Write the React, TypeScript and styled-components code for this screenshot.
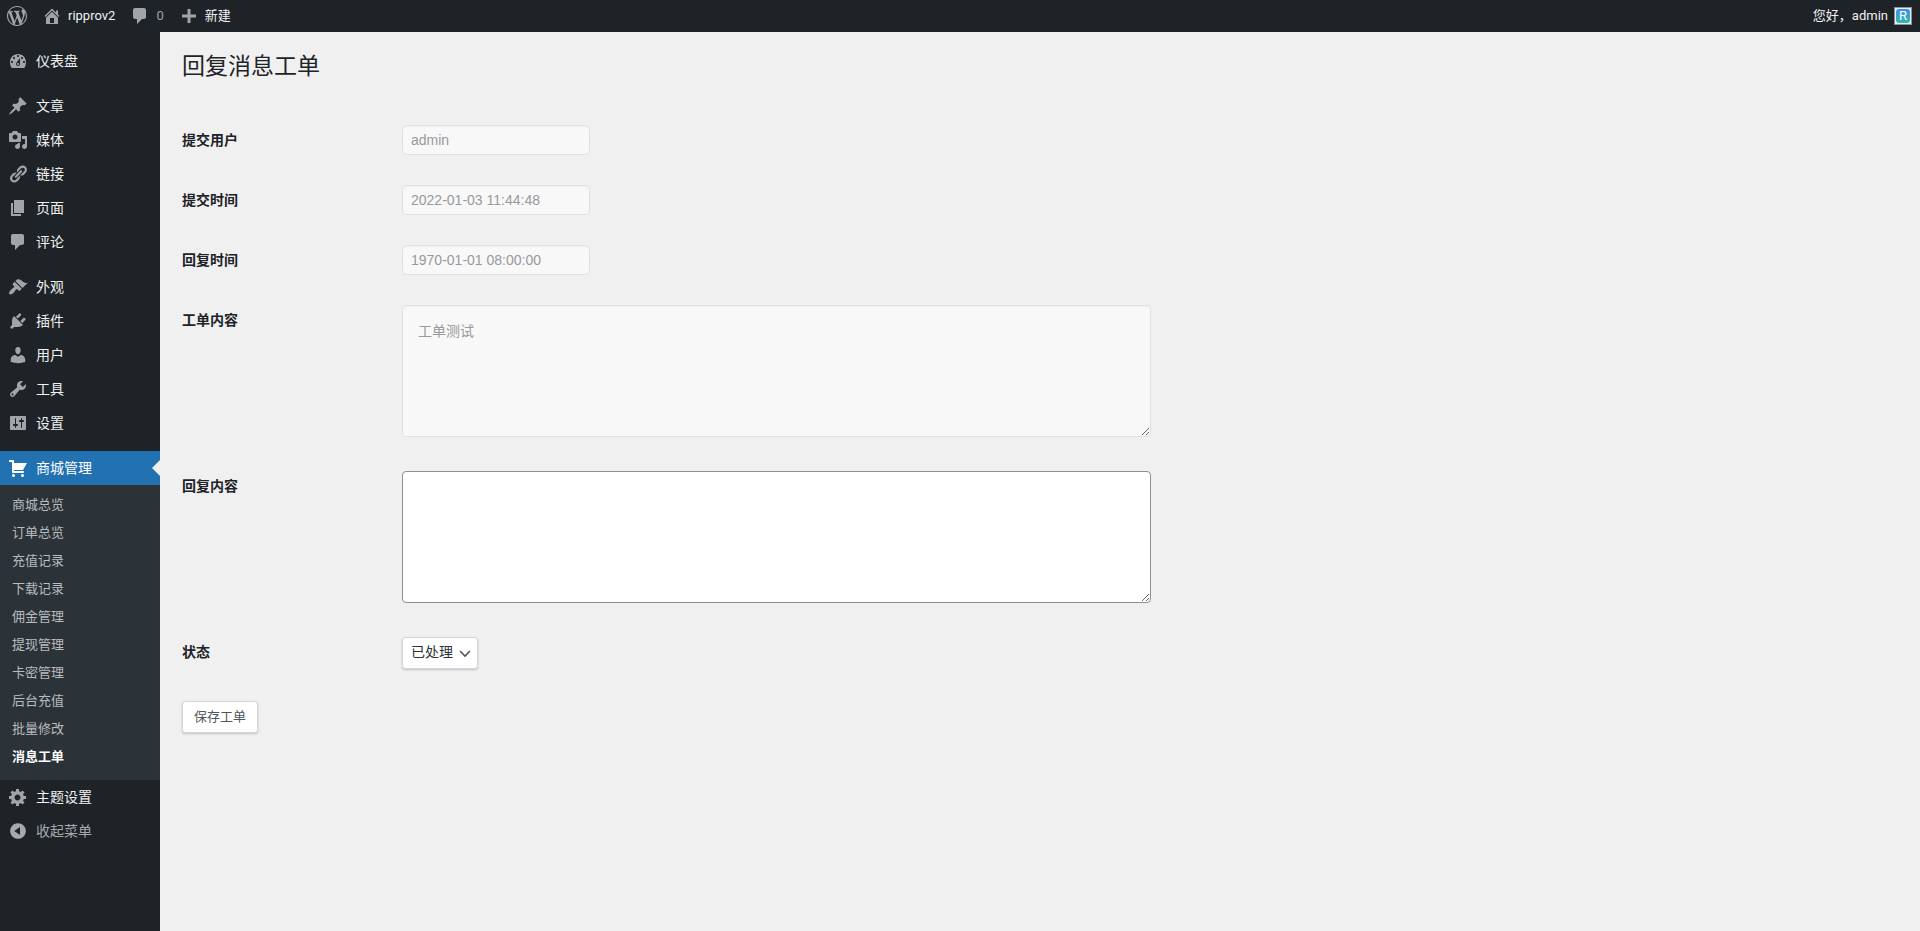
import React from 'react';
import styled, { createGlobalStyle } from 'styled-components';

const GlobalStyle = createGlobalStyle`
  *, *::before, *::after { box-sizing: border-box; }
  html, body, #root { min-height: 100vh; }
  body {
    margin: 0;
    background: #f0f0f0;
    color: #1d2327;
    font-family: "Open Sans", "Noto Sans CJK SC", sans-serif;
    font-size: 14px;
  }
  ul { margin: 0; padding: 0; list-style: none; }
  a { color: inherit; text-decoration: none; }
`;

const icons = {
  wordpress:
    'M20 10c0-5.51-4.49-10-10-10C4.48 0 0 4.49 0 10c0 5.52 4.48 10 10 10 5.51 0 10-4.48 10-10zM7.78 15.37L4.37 6.22c.55-.02 1.17-.08 1.17-.08.5-.06.44-1.13-.06-1.11 0 0-1.45.11-2.37.11-.18 0-.37 0-.58-.01C4.12 2.69 6.87 1.11 10 1.11c2.33 0 4.45.87 6.05 2.34-.68-.11-1.65.39-1.65 1.58 0 .74.45 1.36.9 2.1.35.61.55 1.36.55 2.46 0 1.49-1.4 5-1.4 5l-3.03-8.37c.54-.02.82-.17.82-.17.5-.05.44-1.25-.06-1.22 0 0-1.44.12-2.38.12-.87 0-2.33-.12-2.33-.12-.5-.03-.56 1.2-.06 1.22l.92.08 1.26 3.41zM17.41 10c.24-.64.74-1.87.43-4.25.7 1.29 1.05 2.71 1.05 4.25 0 3.29-1.73 6.24-4.4 7.78.97-2.59 1.94-5.2 2.92-7.78zM6.1 18.09C3.12 16.65 1.11 13.53 1.11 10c0-1.3.23-2.48.72-3.59C3.25 10.3 4.67 14.2 6.1 18.09zm4.03-6.63l2.58 6.98c-.86.29-1.76.45-2.71.45-.79 0-1.57-.11-2.29-.33.81-2.38 1.62-4.74 2.42-7.1z',
  home: 'M16 8.5l1.53 1.53-1.06 1.06L10 4.6l-6.47 6.49-1.06-1.06L10 2.5l4 4v-2h2v4zm-6-2.8l6 5.99V18H4v-6.31zM12 17v-5H8v5h4z',
  comment:
    'M5 2h9c1.1 0 2 .9 2 2v7c0 1.1-.9 2-2 2h-2l-5 5v-5H5c-1.1 0-2-.9-2-2V4c0-1.1.9-2 2-2z',
  plus: 'M17 8.5v3h-5.5V17h-3v-5.5H3v-3h5.5V3h3v5.5z',
  dashboard:
    'M3.76 17h12.48c1.34-1.59 1.76-3.82 1.76-6 0-4.42-3.58-8-8-8s-8 3.58-8 8c0 2.18.42 4.41 1.76 6zM10 4c.55 0 1 .45 1 1s-.45 1-1 1-1-.45-1-1 .45-1 1-1zM6 6c.55 0 1 .45 1 1s-.45 1-1 1-1-.45-1-1 .45-1 1-1zm8 0c.55 0 1 .45 1 1s-.45 1-1 1-1-.45-1-1 .45-1 1-1zm-5.37 5.55L12 7v6c0 1.1-.9 2-2 2s-2-.9-2-2c0-.57.24-1.08.63-1.45zM4 10c.55 0 1 .45 1 1s-.45 1-1 1-1-.45-1-1 .45-1 1-1zm12 0c.55 0 1 .45 1 1s-.45 1-1 1-1-.45-1-1 .45-1 1-1zm-5 3c0-.55-.45-1-1-1s-1 .45-1 1 .45 1 1 1 1-.45 1-1z',
  pin: 'M10.44 3.02l1.82-1.82 6.36 6.35-1.83 1.82c-1.05-.68-2.48-.57-3.41.36l-.75.75c-.92.93-1.04 2.35-.35 3.41l-1.83 1.82-2.41-2.41-2.8 2.79c-.42.42-3.38 2.71-3.8 2.29s1.86-3.39 2.28-3.81l2.79-2.79L4.1 9.36l1.83-1.82c1.05.69 2.48.57 3.4-.36l.75-.75c.93-.92 1.05-2.35.36-3.41z',
  media:
    'M13 11V4c0-.55-.45-1-1-1h-1.67L9 1H5L3.67 3H2c-.55 0-1 .45-1 1v7c0 .55.45 1 1 1h10c.55 0 1-.45 1-1zM7 4.5c1.38 0 2.5 1.12 2.5 2.5S8.38 9.5 7 9.5 4.5 8.38 4.5 7 5.62 4.5 7 4.5zM14 6h5v10.5c0 1.38-1.12 2.5-2.5 2.5S14 17.88 14 16.5s1.12-2.5 2.5-2.5c.17 0 .34.02.5.05V9h-3V6zm-4 8.05V13h2v3.5c0 1.38-1.12 2.5-2.5 2.5S7 17.88 7 16.5 8.12 14 9.5 14c.17 0 .34.02.5.05z',
  link: 'M17.74 2.76c1.68 1.69 1.68 4.41 0 6.1l-1.53 1.52c-1.12 1.12-2.7 1.47-4.14 1.09l2.62-2.61.76-.77.76-.76c.84-.84.84-2.2 0-3.04-.84-.85-2.2-.85-3.04 0l-.77.76-3.38 3.38c-.37-1.44-.02-3.02 1.1-4.14l1.52-1.53c1.69-1.68 4.42-1.68 6.1 0zM8.59 13.43l5.34-5.34c.42-.42.42-1.1 0-1.52-.44-.43-1.13-.39-1.53 0l-5.33 5.34c-.42.42-.42 1.1 0 1.52.44.43 1.13.39 1.52 0zm-.76 2.29l4.14-4.15c.38 1.44.03 3.02-1.09 4.14l-1.52 1.53c-1.69 1.68-4.41 1.68-6.1 0-1.68-1.68-1.68-4.42 0-6.1l1.53-1.52c1.12-1.12 2.7-1.47 4.14-1.1l-4.14 4.15c-.85.84-.85 2.2 0 3.05.84.84 2.2.84 3.04 0z',
  page: 'M6 15V2h10v13H6zm-1 1h8v2H3V5h2v11z',
  brush:
    'M14.48 11.06L7.41 3.99l1.5-1.5c.5-.56 2.3-.47 3.51.32 1.21.8 1.43 1.28 2.91 2.1 1.18.64 2.45 1.26 4.45.85zm-.71.71L6.7 4.7 4.93 6.47c-.39.39-.39 1.02 0 1.41l1.06 1.06c.39.39.39 1.03 0 1.42-.6.6-1.43 1.11-2.21 1.69-.35.26-.7.53-1.01.84C1.43 14.23.4 16.08 1.4 17.07c.99 1 2.84-.03 4.18-1.36.31-.31.58-.66.85-1.02.57-.78 1.08-1.61 1.69-2.21.39-.39 1.02-.39 1.41 0l1.06 1.06c.39.39 1.02.39 1.41 0z',
  plugin:
    'M13.11 4.36L9.87 7.6 8 5.73l3.24-3.24c.35-.34 1.05-.2 1.56.32.52.51.66 1.21.31 1.55zm-8 1.77l.91-1.12 9.01 9.01-1.19.84c-.71.71-2.63 1.16-3.82 1.16H6.14L4.9 17.26c-.59.59-1.54.59-2.12 0-.59-.58-.59-1.53 0-2.12l1.24-1.24v-3.88c0-1.13.4-3.19 1.09-3.89zm7.26 3.97l3.24-3.24c.34-.35 1.04-.21 1.55.31.52.51.66 1.21.31 1.55l-3.24 3.25z',
  user: 'M10 9.25c-2.27 0-2.73-3.44-2.73-3.44C7 4.02 7.82 2 9.97 2c2.16 0 2.98 2.02 2.71 3.81 0 0-.41 3.44-2.68 3.44zm0 2.57L12.72 10c2.39 0 4.52 2.33 4.52 4.53v2.49s-3.65 1.13-7.24 1.13c-3.65 0-7.24-1.13-7.24-1.13v-2.49c0-2.25 1.94-4.48 4.47-4.48z',
  wrench:
    'M16.68 9.77c-1.34 1.34-3.3 1.67-4.95.99l-5.41 6.52c-.99.99-2.59.99-3.58 0s-.99-2.59 0-3.57l6.52-5.42c-.68-1.65-.35-3.61.99-4.95 1.28-1.28 3.12-1.62 4.72-1.06l-2.89 2.89 2.82 2.82 2.86-2.87c.53 1.58.18 3.39-1.08 4.65zM3.81 16.21c.4.39 1.04.39 1.43 0 .4-.4.4-1.04 0-1.43-.39-.4-1.03-.4-1.43 0-.39.39-.39 1.03 0 1.43z',
  sliders:
    'M18 16V4c0-.55-.45-1-1-1H3c-.55 0-1 .45-1 1v12c0 .55.45 1 1 1h14c.55 0 1-.45 1-1zM8 11h1c.55 0 1 .45 1 1s-.45 1-1 1H8v1.5c0 .28-.22.5-.5.5s-.5-.22-.5-.5V13H6c-.55 0-1-.45-1-1s.45-1 1-1h1V5.5c0-.28.22-.5.5-.5s.5.22.5.5V11zm5-2h-1c-.55 0-1-.45-1-1s.45-1 1-1h1V5.5c0-.28.22-.5.5-.5s.5.22.5.5V7h1c.55 0 1 .45 1 1s-.45 1-1 1h-1v5.5c0 .28-.22.5-.5.5s-.5-.22-.5-.5V9z',
  cart: 'M6 13h9c.55 0 1 .45 1 1s-.45 1-1 1H5c-.55 0-1-.45-1-1V4H2c-.55 0-1-.45-1-1s.45-1 1-1h3c.55 0 1 .45 1 1v2h13l-4 7H6v1zm-.5 3c.83 0 1.5.67 1.5 1.5S6.33 19 5.5 19 4 18.33 4 17.5 4.67 16 5.5 16zm9 0c.83 0 1.5.67 1.5 1.5s-.67 1.5-1.5 1.5-1.5-.67-1.5-1.5.67-1.5 1.5-1.5z',
  gear: 'M18 12h-2.18c-.17.7-.44 1.35-.81 1.93l1.54 1.54-2.1 2.1-1.54-1.54c-.58.36-1.23.63-1.91.79V19H8v-2.18c-.68-.16-1.33-.43-1.91-.79l-1.54 1.54-2.12-2.12 1.54-1.54c-.36-.58-.63-1.23-.79-1.91H1V9.03h2.17c.16-.7.44-1.35.8-1.94L2.43 5.55l2.1-2.1 1.54 1.54c.58-.37 1.24-.64 1.93-.81V2h3v2.18c.68.16 1.33.43 1.91.79l1.54-1.54 2.12 2.12-1.54 1.54c.36.59.64 1.24.8 1.94H18V12zm-8.5 1.5c1.66 0 3-1.34 3-3s-1.34-3-3-3-3 1.34-3 3 1.34 3 3 3z',
  collapse:
    'M10 2.16c4.33 0 7.84 3.51 7.84 7.84s-3.51 7.84-7.84 7.84S2.16 14.33 2.16 10 5.67 2.16 10 2.16zm2 11.72V6.12L6.18 9.97z',
};

type IconName = keyof typeof icons;

const Svg = styled.svg`
  display: block;
  flex: none;
  width: 20px;
  height: 20px;
  fill: currentColor;
`;

const Icon = ({ name }: { name: IconName }) => (
  <Svg viewBox="0 0 20 20" aria-hidden="true">
    <path fillRule={name === 'home' ? 'nonzero' : 'evenodd'} d={icons[name]} />
  </Svg>
);

const Page = styled.div`
  display: flex;
  flex-direction: column;
  min-height: 100vh;
`;

const AdminBar = styled.header`
  display: flex;
  justify-content: space-between;
  height: 32px;
  padding: 0 8px 0 7px;
  background: #1d2327;
  color: #f0f0f1;
  font-family: Roboto, "Noto Sans CJK SC", sans-serif;
  font-size: 13px;
  line-height: 32px;
`;

const BarGroup = styled.nav`
  display: flex;
  gap: 15px;
`;

const BarLink = styled.a<{ $muted?: boolean }>`
  display: flex;
  align-items: center;
  gap: 6px;
  color: ${(p) => (p.$muted ? '#9ca2a7' : '#f0f0f1')};

  svg { color: #a0a5aa; }
`;

const Avatar = styled.span`
  display: flex;
  width: 18px;
  height: 18px;
  padding: 1px;
  border: 1px solid #8c8f94;
  background: #e4f0f6;
`;

const AvatarLetter = styled.span`
  flex: 1;
  border-radius: 3px;
  background: linear-gradient(#3f8ef0, #35b9a5);
  color: #ffffff;
  font-size: 13px;
  line-height: 14px;
  text-align: center;
`;

const Body = styled.div`
  display: flex;
  flex: 1;
`;

const Sidebar = styled.nav`
  flex: none;
  width: 160px;
  padding-top: 12px;
  background: #1d2327;
`;

const MenuGroup = styled.ul`
  margin-bottom: 11px;
`;

const menuItemStyle = `
  display: flex;
  align-items: center;
  gap: 8px;
  width: 100%;
  height: 34px;
  padding: 0 8px;
  border: 0;
  font: inherit;
  text-align: left;
`;

const MenuText = styled.span`
  padding-bottom: 2px;
`;

const MenuLink = styled.a<{ $current?: boolean }>`
  ${menuItemStyle}
  position: relative;
  background: ${(p) => (p.$current ? '#2271b1' : 'transparent')};
  color: ${(p) => (p.$current ? '#ffffff' : '#f0f0f1')};

  svg { color: ${(p) => (p.$current ? '#ffffff' : '#a0a5aa')}; }

  &::after {
    content: ${(p) => (p.$current ? "''" : 'none')};
    position: absolute;
    top: 9px;
    right: 0;
    border: 8px solid transparent;
    border-left-width: 0;
    border-right-color: #f0f0f0;
  }
`;

const CollapseButton = styled.button`
  ${menuItemStyle}
  background: none;
  color: #a7aaad;
`;

const SubMenu = styled.ul`
  padding: 5px 0 10px;
  background: #2c3338;
`;

const SubLink = styled.a<{ $current?: boolean }>`
  display: block;
  padding: 0 12px;
  color: ${(p) => (p.$current ? '#ffffff' : '#b8bbbf')};
  font-size: 13px;
  font-weight: ${(p) => (p.$current ? 600 : 400)};
  line-height: 28px;
`;

const Main = styled.main`
  flex: 1;
  min-width: 0;
  padding: 10px 20px 40px 22px;
`;

const Title = styled.h1`
  margin: 0;
  padding: 8px 0;
  font-size: 23px;
  font-weight: 400;
  line-height: 30px;
`;

const Form = styled.form`
  margin-top: 22px;
`;

const Field = styled.div`
  display: grid;
  grid-template-columns: 200px minmax(0, 1fr);
  column-gap: 20px;
  padding: 15px 0;
`;

const Label = styled.label`
  padding-top: 5px;
  font-weight: 600;
  line-height: 20px;
`;

const TextInput = styled.input`
  width: 188px;
  height: 30px;
  padding: 0 8px;
  border: 1px solid #e1e1e3;
  border-radius: 4px;
  background: #f8f8f8;
  box-shadow: inset 0 1px 2px rgba(0, 0, 0, 0.04);
  color: #97999c;
  font-family: "Liberation Sans", Arial, sans-serif;
  font-size: 14px;
`;

const TextArea = styled.textarea`
  display: block;
  width: 100%;
  max-width: 749px;
  height: 132px;
  margin-bottom: 4px;
  padding: 15px;
  border: 1px solid #8c8f94;
  border-radius: 4px;
  background: #ffffff;
  color: #2c3338;
  font-family: "Liberation Sans", "Noto Sans CJK SC", sans-serif;
  font-size: 14px;
  line-height: 20px;
  resize: both;

  &:disabled {
    border-color: #e1e1e3;
    background: #f8f8f8;
    box-shadow: inset 0 1px 2px rgba(0, 0, 0, 0.04);
    color: #97999c;
  }
`;

const raised = `
  height: 32px;
  border: 1px solid #d5d5da;
  border-radius: 3px;
  background: #ffffff;
  box-shadow: 0 1px 2px rgba(60, 60, 90, 0.25);
`;

const SelectBox = styled.div`
  position: relative;
  width: 76px;

  svg {
    position: absolute;
    top: 8px;
    right: 5px;
    width: 16px;
    height: 16px;
    fill: none;
    stroke: #555555;
    stroke-width: 1.6;
    pointer-events: none;
  }
`;

const Select = styled.select`
  ${raised}
  display: block;
  width: 100%;
  padding: 0 24px 3px 8px;
  color: #2c3338;
  font-family: inherit;
  font-size: 14px;
  appearance: none;
`;

const SaveButton = styled.button`
  ${raised}
  margin-top: 17px;
  padding: 0 11px 4px;
  color: #50575e;
  font-family: inherit;
  font-size: 13px;
`;

type MenuEntry = { icon: IconName; text: string };

const menuGroups: MenuEntry[][] = [
  [{ icon: 'dashboard', text: '仪表盘' }],
  [
    { icon: 'pin', text: '文章' },
    { icon: 'media', text: '媒体' },
    { icon: 'link', text: '链接' },
    { icon: 'page', text: '页面' },
    { icon: 'comment', text: '评论' },
  ],
  [
    { icon: 'brush', text: '外观' },
    { icon: 'plugin', text: '插件' },
    { icon: 'user', text: '用户' },
    { icon: 'wrench', text: '工具' },
    { icon: 'sliders', text: '设置' },
  ],
];

const shopPages = [
  '商城总览', '订单总览', '充值记录', '下载记录', '佣金管理',
  '提现管理', '卡密管理', '后台充值', '批量修改', '消息工单',
];

const infoFields = [
  { id: 'user', label: '提交用户', value: 'admin' },
  { id: 'created', label: '提交时间', value: '2022-01-03 11:44:48' },
  { id: 'replied', label: '回复时间', value: '1970-01-01 08:00:00' },
];

export default function App() {
  return (
    <Page>
      <GlobalStyle />
      <AdminBar>
        <BarGroup>
          <BarLink href="#" aria-label="WordPress"><Icon name="wordpress" /></BarLink>
          <BarLink href="#"><Icon name="home" />ripprov2</BarLink>
          <BarLink href="#" $muted><Icon name="comment" />0</BarLink>
          <BarLink href="#"><Icon name="plus" />新建</BarLink>
        </BarGroup>
        <BarGroup>
          <BarLink href="#">
            您好，admin
            <Avatar><AvatarLetter>R</AvatarLetter></Avatar>
          </BarLink>
        </BarGroup>
      </AdminBar>
      <Body>
        <Sidebar>
          {menuGroups.map((group) => (
            <MenuGroup key={group[0].text}>
              {group.map((item) => (
                <li key={item.text}>
                  <MenuLink href="#"><Icon name={item.icon} /><MenuText>{item.text}</MenuText></MenuLink>
                </li>
              ))}
            </MenuGroup>
          ))}
          <MenuGroup>
            <li>
              <MenuLink href="#" $current><Icon name="cart" /><MenuText>商城管理</MenuText></MenuLink>
              <SubMenu>
                {shopPages.map((text) => (
                  <li key={text}>
                    <SubLink href="#" $current={text === '消息工单'}>{text}</SubLink>
                  </li>
                ))}
              </SubMenu>
            </li>
            <li><MenuLink href="#"><Icon name="gear" /><MenuText>主题设置</MenuText></MenuLink></li>
            <li><CollapseButton type="button"><Icon name="collapse" /><MenuText>收起菜单</MenuText></CollapseButton></li>
          </MenuGroup>
        </Sidebar>
        <Main>
          <Title>回复消息工单</Title>
          <Form>
            {infoFields.map((f) => (
              <Field key={f.id}>
                <Label htmlFor={f.id}>{f.label}</Label>
                <TextInput id={f.id} type="text" defaultValue={f.value} disabled />
              </Field>
            ))}
            <Field>
              <Label htmlFor="content">工单内容</Label>
              <TextArea id="content" defaultValue="工单测试" disabled />
            </Field>
            <Field>
              <Label htmlFor="reply">回复内容</Label>
              <TextArea id="reply" />
            </Field>
            <Field>
              <Label htmlFor="status">状态</Label>
              <SelectBox>
                <Select id="status" defaultValue="done">
                  <option value="done">已处理</option>
                </Select>
                <svg viewBox="0 0 16 16" aria-hidden="true"><path d="M3 6l5 5 5-5" /></svg>
              </SelectBox>
            </Field>
            <SaveButton type="button">保存工单</SaveButton>
          </Form>
        </Main>
      </Body>
    </Page>
  );
}
